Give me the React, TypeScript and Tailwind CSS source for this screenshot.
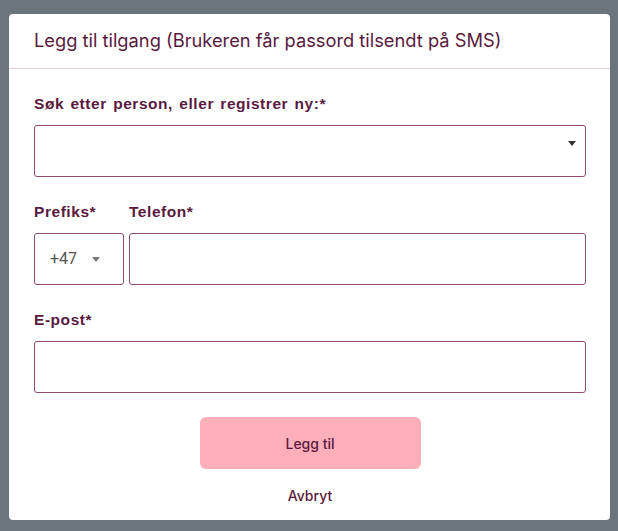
import React from "react";

function Caret({ className }: { className?: string }) {
  return (
    <svg width="8" height="5" viewBox="0 0 8 5" className={className}>
      <path d="M0 0 L8 0 L4 5 Z" fill="currentColor" />
    </svg>
  );
}

const labelCls =
  "h-[20px] leading-[20px] text-[15.5px] font-bold tracking-[0.55px] [word-spacing:1.5px] mb-[11px] font-['Liberation_Sans',Arial,sans-serif]";

export default function App() {
  return (
    <div className="w-[618px] h-[531px] bg-[#6b737b] pt-[14px] pl-[9px] overflow-hidden font-['Inter','Noto_Sans',sans-serif]">
      <div className="w-[601px] bg-white rounded-[4px] text-[#5a1a40]">
        <div className="h-[55px] px-[25px] flex items-center border-b border-[#e3d0da]">
          <h1 className="text-[18.3px] font-normal">Legg til tilgang (Brukeren får passord tilsendt på SMS)</h1>
        </div>
        <div className="pl-[25px] pr-[24px] pt-[25px] pb-[14px] flex flex-col">
          <label className={labelCls}>Søk etter person, eller registrer ny:*</label>
          <div className="h-[52px] border border-[#8e4b72] rounded-[3px] flex items-start justify-end pr-[9px] pt-[15px]">
            <Caret className="text-[#333]" />
          </div>

          <div className="flex gap-[5px] mt-[25px]">
            <div className="w-[90px] flex flex-col">
              <label className={labelCls}>Prefiks*</label>
              <div className="h-[52px] border border-[#8e4b72] rounded-[3px] flex items-center pl-[15px]">
                <span className="text-[16px] text-[#555] font-['Roboto','Liberation_Sans',sans-serif]">+47</span>
                <Caret className="text-[#777] ml-[15px]" />
              </div>
            </div>
            <div className="flex-1 flex flex-col">
              <label className={labelCls}>Telefon*</label>
              <div className="h-[52px] border border-[#8e4b72] rounded-[3px]" />
            </div>
          </div>

          <label className={labelCls + " mt-[25px]"}>E-post*</label>
          <div className="h-[52px] border border-[#8e4b72] rounded-[3px]" />

          <div className="flex justify-center mt-[24px]">
            <button className="w-[221px] h-[52px] rounded-[6px] bg-[#ffafba] text-[14px] font-medium text-[#5a1a40]">Legg til</button>
          </div>
          <div className="flex justify-center mt-[17px]">
            <span className="h-[20px] leading-[20px] text-[14px] font-medium">Avbryt</span>
          </div>
        </div>
      </div>
    </div>
  );
}
